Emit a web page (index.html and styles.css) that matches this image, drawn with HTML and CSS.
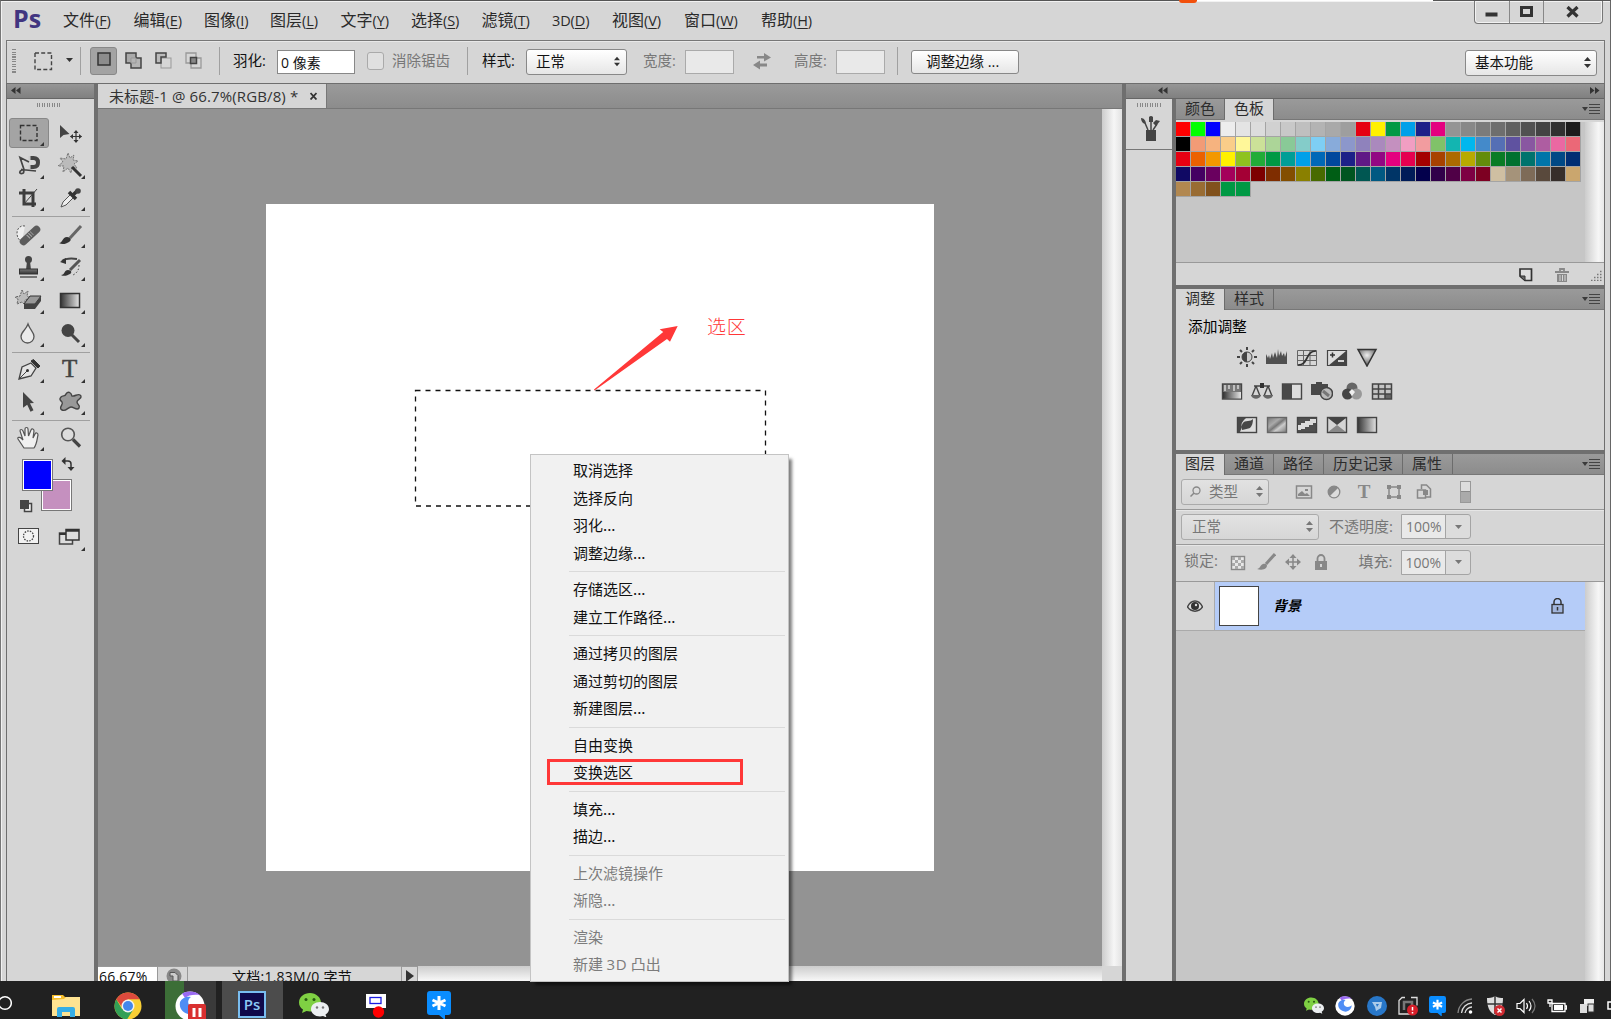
FILE: index.html
```html
<!DOCTYPE html>
<html lang="zh-CN">
<head>
<meta charset="utf-8">
<title>Photoshop</title>
<link rel="stylesheet" href="styles.css">
</head>
<body>
<svg width="0" height="0" class="defs">
  <defs>
    <linearGradient id="gDark" x1="0" y1="0" x2="0" y2="1"><stop offset="0" stop-color="#777"/><stop offset="1" stop-color="#333"/></linearGradient>
    <linearGradient id="gH" x1="0" y1="0" x2="1" y2="0"><stop offset="0" stop-color="#333"/><stop offset="1" stop-color="#e4e4e4"/></linearGradient>
    <linearGradient id="gDiag" x1="0" y1="0" x2="1" y2="1"><stop offset="0" stop-color="#777"/><stop offset=".35" stop-color="#aaa"/><stop offset=".5" stop-color="#777"/><stop offset=".65" stop-color="#ccc"/><stop offset="1" stop-color="#777"/></linearGradient>
    <radialGradient id="gTri" cx=".5" cy=".35" r=".5"><stop offset="0" stop-color="#eee"/><stop offset="1" stop-color="#777"/></radialGradient>
    <symbol id="corner" viewBox="0 0 4 4"><path d="M4 0V4H0Z" fill="#333"/></symbol>
    <symbol id="updown" viewBox="0 0 7 11"><path d="M3.500 0L7 4H0ZM3.500 11L0 7H7Z" fill="currentColor"/></symbol>
    <symbol id="flyout" viewBox="0 0 18 10"><path d="M0 3h6l-3 4z" fill="#3a3a3a"/><path d="M7 .5h11M7 3.500h11M7 6.500h11M7 9.500h11" stroke="#444"/></symbol>
    <symbol id="wechat" viewBox="0 0 30 24"><path d="M11 0C5 0 0 4 0 9.500c0 3 1.500 5.500 4 7L3 20l4.500-2c1 .3 2.500.5 3.500.5 6 0 11-4 11-9S17 0 11 0Z" fill="#7fd043"/><circle cx="7" cy="6.500" r="1.500" fill="#275a12"/><circle cx="15" cy="6.500" r="1.500" fill="#275a12"/><path d="M21 9c-5 0-9 3-9 7.200 0 4 4 7.200 9 7.200 1 0 2-.2 3-.5l3.500 1.600-1-3c2-1.300 3.500-3 3.500-5.300C30 12 26 9 21 9Z" fill="#eceff1"/><circle cx="18" cy="14.500" r="1.200" fill="#777"/><circle cx="24" cy="14.500" r="1.200" fill="#777"/></symbol>
    <symbol id="bird" viewBox="0 0 30 30"><circle cx="15" cy="15" r="14.500" fill="#fff"/><path d="M7 2.500C12-.5 20-.5 25 4 19 3 13 4 10 7Z" fill="#9a6af2"/><path d="M5 11c2-4 6-6 11-5-3 2-4 6-1 9 3 2.500 7 2 10-1 0 6-6 11-12 9C7 21 4 17 5 11Z" fill="#4f8df5"/></symbol>
    <symbol id="star" viewBox="0 0 24 28"><path d="M3 0h18q3 0 3 3v18q0 3-3 3h-3v5l-6-5H3q-3 0-3-3V3q0-3 3-3Z" fill="#0a8dff"/><path d="M12 5v14M5.500 9l13 6M18.500 9l-13 6" stroke="#fff" stroke-width="3"/></symbol>
  </defs>
</svg>

<div class="app">
  <div class="strip"><span class="strip-dot"></span><span class="strip-line"></span></div>
  <header class="menubar">
    <span class="logo">Ps</span>
    <nav class="menus">
      <span class="m m1">文件<i>(<u>F</u>)</i></span><span class="m m2">编辑<i>(<u>E</u>)</i></span><span class="m m0">图像<i>(<u>I</u>)</i></span><span class="m m2">图层<i>(<u>L</u>)</i></span><span class="m m3">文字<i>(<u>Y</u>)</i></span><span class="m m3">选择<i>(<u>S</u>)</i></span><span class="m m3">滤镜<i>(<u>T</u>)</i></span><span class="m m4"><i>3D(<u>D</u>)</i></span><span class="m m5">视图<i>(<u>V</u>)</i></span><span class="m m6">窗口<i>(<u>W</u>)</i></span><span class="m m6">帮助<i>(<u>H</u>)</i></span>
    </nav>
    <div class="winbtns">
      <span class="wb wb-min"><svg width="14" height="12"><rect x=".5" y="6.500" width="12" height="4" fill="#333"/></svg></span>
      <span class="wb wb-max"><svg width="14" height="12"><rect x="1.500" y="1.500" width="10" height="8" fill="none" stroke="#333" stroke-width="3"/></svg></span>
      <span class="wb wb-close"><svg width="14" height="12"><path d="M1.500 1l10 9.500M11.500 1l-10 9.500" stroke="#333" stroke-width="3.200"/></svg></span>
    </div>
  </header>

  <section class="options">
    <span class="grip-v"></span>
    <svg class="o-marq" width="19" height="19"><rect x="1" y="1" width="16.500" height="16.500" fill="none" stroke="#444" stroke-width="1.400" stroke-dasharray="4 2.200"/></svg>
    <svg class="o-caret" width="7" height="4"><path d="M0 0h7L3.500 4z" fill="#333"/></svg>
    <span class="vsep s1"></span>
    <span class="o-mode"><svg width="14" height="14"><rect x="1" y="1" width="12" height="12" fill="#8c8c8c" stroke="#333" stroke-width="1.500"/></svg></span>
    <svg class="o-i1" width="17" height="17"><rect x="1" y="1" width="10" height="10" fill="#aaa" stroke="#444" stroke-width="1.500"/><path d="M6 6h10v10H6z" fill="#b4b4b4"/><path d="M11 6h5v10H6v-5" fill="none" stroke="#444" stroke-width="1.500"/><path d="M6 11V6h5v5z" fill="none" stroke="#999"/></svg>
    <svg class="o-i2" width="17" height="17"><rect x="6" y="6" width="10" height="10" fill="none" stroke="#999"/><path d="M6 11H1V1h10v4H6z" fill="#bbb" stroke="#444" stroke-width="1.500"/></svg>
    <svg class="o-i3" width="17" height="17"><path d="M1 1h10v10H1zM6 6h10v10H6z" fill="none" stroke="#999" stroke-width="1.300"/><rect x="5.500" y="5.500" width="6" height="6" fill="#888" stroke="#444" stroke-width="1.500"/></svg>
    <span class="vsep s2"></span>
    <label class="lbl l1">羽化:</label>
    <span class="inp inp-f">0 像素</span>
    <span class="chk"></span>
    <label class="lbl dim l2">消除锯齿</label>
    <span class="vsep s3"></span>
    <label class="lbl l3">样式:</label>
    <span class="sel sel-s">正常<svg width="6" height="11"><use href="#updown"/></svg></span>
    <label class="lbl dim l4">宽度:</label>
    <span class="inp inp-d"></span>
    <svg class="o-swap" width="18" height="18" fill="#888"><path d="M4 4h7V1l7 4.500-7 4V6.500H4zM14 11.500H7V8.500L0 13l7 4.500V14.500h7z"/></svg>
    <label class="lbl dim l5">高度:</label>
    <span class="inp inp-d"></span>
    <span class="vsep s4"></span>
    <span class="btn">调整边缘 ...</span>
    <span class="sel sel-w">基本功能<svg width="7" height="11"><use href="#updown"/></svg></span>
  </section>

  <main class="work">
    <aside class="tools">
      <div class="dockhead"><svg width="10" height="7" fill="#333"><path d="M4.500 0v7L0 3.500zM9.500 0v7L5 3.500z"/></svg></div>
      <span class="grip-h"></span>
      <div class="tgrid">
        <span class="tool on"><svg viewBox="0 0 41 32"><rect x="11.500" y="8.500" width="16.500" height="15" fill="none" stroke="#333" stroke-width="1.400" stroke-dasharray="4 2"/></svg></span>
        <span class="tool nc"><svg viewBox="0 0 41 32"><path d="M10 8v13l3.500-3 6-1z" fill="#444"/><path d="M26 14v11M20.500 19.500h11" stroke="#333" stroke-width="1.200"/><path d="M26 13l2.500 3h-5zM26 26l2.500-3h-5zM20 19.500l3-2.500v5zM32 19.500l-3-2.500v5z" fill="#333"/></svg></span>
        <span class="tool"><svg viewBox="0 0 41 32"><path d="M20 12L11 7.500l4 12M13 20c-3 1-3 4 0 3.500s2-4-1-4l15 1.500" fill="none" stroke="#444" stroke-width="1.700"/><path d="M20 8h4.500q4.500 0 4.500 4.500T24.500 17H20" fill="none" stroke="#444" stroke-width="4"/><path d="M19.500 6h2v4h-2zM19.500 15h2v4h-2z" fill="#ccc"/></svg></span>
        <span class="tool"><svg viewBox="0 0 41 32"><path d="M18 3l2 5 4-3-1 5 5 1-4 3 3 4-5-1-1 6-3-5-5 4 1-6-6 0 5-4-3-4 6 1z" fill="#bbb" stroke="#777" stroke-dasharray="2 1"/><path d="M22 17l9 9" stroke="#333" stroke-width="3"/></svg></span>
        <span class="tool"><svg viewBox="0 0 41 32"><path d="M15 7v15h12M10 11h14v14" fill="none" stroke="#3c3c3c" stroke-width="3"/><path d="M15 22L28 7" stroke="#444"/></svg></span>
        <span class="tool"><svg viewBox="0 0 41 32"><path d="M11 25l2-5 8-8 3 3-8 8z" fill="#eee" stroke="#555"/><path d="M19 10l7 7M22 14l6-6" stroke="#333" stroke-width="3.500"/><circle cx="28" cy="9" r="2.800" fill="#444"/></svg></span>
      </div>
      <div class="tgrid sep g2">
        <span class="tool"><svg viewBox="0 0 41 32"><path d="M16 7c-5-1-8 3-8 7s2 8 5 8" fill="#eee" stroke="#555" stroke-dasharray="2 1.500"/><path d="M14.500 22.500L27.500 10.500" stroke="#5c5c5c" stroke-width="7.500" stroke-linecap="round"/><path d="M19 18l4-4" stroke="#aaa" stroke-width="5" stroke-dasharray="1 1.500"/></svg></span>
        <span class="tool"><svg viewBox="0 0 41 32"><path d="M31 7L20 19" stroke="#666" stroke-width="3"/><path d="M9 24c4 0 3-6 8-6 4 0 5 3 2 5s-7 3-10 1z" fill="#333"/></svg></span>
        <span class="tool"><svg viewBox="0 0 41 32"><circle cx="19.500" cy="7.500" r="3.500" fill="#444"/><path d="M18 9h3l1 9h-5z" fill="#444"/><rect x="10.500" y="17" width="18" height="5" fill="url(#gDark)" stroke="#333"/><path d="M11 25h17" stroke="#555" stroke-width="1.500"/></svg></span>
        <span class="tool"><svg viewBox="0 0 41 32"><path d="M12 9c4-3 8-3 15-2" fill="none" stroke="#444" stroke-width="2"/><path d="M10 10l6-4v6z" fill="#333"/><path d="M30 8L20 18" stroke="#555" stroke-width="3"/><path d="M11 23c4 0 3-5 7-5 4 0 4 3 2 4s-6 3-9 1z" fill="#333"/><path d="M29 13c0 5-2 8-6 10" fill="none" stroke="#444" stroke-dasharray="1.500 2"/></svg></span>
        <span class="tool"><svg viewBox="0 0 41 32"><path d="M13 5l2 4 4-3-1 5 3 2-5 2 0 5-3-3-5 2 1-5-3-2 5-1z" fill="#bbb" stroke="#666" stroke-dasharray="2 1"/><path d="M21 11h11l-6 8H15z" fill="#999" stroke="#333"/><path d="M15 19h11v5H15zM26 19l6-8v5l-6 8z" fill="#444"/></svg></span>
        <span class="tool"><svg viewBox="0 0 41 32"><rect x="10.500" y="8.500" width="19" height="14" fill="url(#gH)" stroke="#333" stroke-width="1.500"/></svg></span>
        <span class="tool"><svg viewBox="0 0 41 32"><path d="M19 6c2 6 6 8 6 12.500a6.500 6.500 0 0 1-13 0C12 14 17 12 19 6z" fill="#eaeaea" stroke="#555" stroke-width="1.300"/></svg></span>
        <span class="tool"><svg viewBox="0 0 41 32"><circle cx="18" cy="12.500" r="6.500" fill="#444"/><path d="M21 16l8 8" stroke="#444" stroke-width="3"/></svg></span>
      </div>
      <div class="tgrid sep">
        <span class="tool"><svg viewBox="0 0 41 32"><path d="M10 25l3-12 9-4 5 5-5 8z" fill="#e4e4e4" stroke="#444" stroke-width="1.300"/><path d="M10 25l8-8" stroke="#444"/><circle cx="18.500" cy="16.500" r="1.500" fill="#333"/><path d="M22 7l7 7 2-2-6.500-6.500z" fill="#333" stroke="#333"/></svg></span>
        <span class="tool"><b>T</b></span>
        <span class="tool"><svg viewBox="0 0 41 32"><path d="M14 6l11 11-4 .3 3.500 7-3 1.500-3.300-7-4.200 3z" fill="#444"/></svg></span>
        <span class="tool"><svg viewBox="0 0 41 32"><path d="M16 8c2-3 5-2 6 2 3 1 7-4 9 0 1 3-4 3-4 6s4 3 2 6-5-1-8-1-5 5-9 3 2-6 0-8-3-3-1-5 4 0 5-3z" fill="#999" stroke="#444" stroke-width="1.400"/></svg></span>
      </div>
      <div class="tgrid sep">
        <span class="tool"><svg viewBox="0 0 41 32"><path d="M15 26c-2-3-4-6-6-9-1-2 2-2 3-1l2 2-3-9c0-2 2-2 3 0l2 5V7c0-2 3-2 3 0l.5 7L22 8c1-2 3-1 3 1l-1 7 2-4c1-2 3-1 3 1-1 4-1 9-4 13z" fill="#f0f0f0" stroke="#555" stroke-width="1.200"/></svg></span>
        <span class="tool nc"><svg viewBox="0 0 41 32"><circle cx="18" cy="12.500" r="6.300" fill="#ddd" stroke="#555" stroke-width="1.600"/><path d="M23 17.500l7 7" stroke="#444" stroke-width="3.200"/></svg></span>
      </div>
      <svg class="colors" width="87" height="94" viewBox="0 0 87 94">
        <rect x="34.500" y="25.500" width="30" height="31" fill="#fff" stroke="#777"/><rect x="36" y="27" width="27" height="28" fill="#c590bf"/>
        <rect x="15.500" y="5.500" width="30" height="31" fill="#fff" stroke="#777"/><rect x="17" y="7" width="27" height="28" fill="#00f"/>
        <path d="M56 7h5q3 0 3 3v5" fill="none" stroke="#333" stroke-width="1.500"/><path d="M54.500 7l4-4v8zM64 17l-3.500-4h7z" fill="#333"/>
        <rect x="17.500" y="49.500" width="7" height="8" fill="#eee" stroke="#444" stroke-width="1.500"/><rect x="13" y="46" width="9" height="9" fill="#444"/>
        <rect x="11.500" y="74.500" width="20" height="15" fill="#f2f2f2" stroke="#444"/><circle cx="21.500" cy="82" r="5" fill="none" stroke="#444" stroke-width="1.300" stroke-dasharray="1.500 1.200"/>
        <rect x="52.500" y="79" width="13" height="11" fill="#ddd" stroke="#444" stroke-width="1.500"/><path d="M52 80h13" stroke="#333" stroke-width="2"/><rect x="59" y="75.500" width="13" height="10.500" fill="#ddd" stroke="#333" stroke-width="1.500"/><path d="M59 76.500h13" stroke="#333" stroke-width="2.500"/>
      </svg>
      <svg class="lastcorner" width="4" height="4"><use href="#corner"/></svg>
    </aside>

    <section class="doc">
      <div class="doctabs"><span class="doctab">未标题-1 @ 66.7%(RGB/8) *<svg width="7" height="8"><path d="M.5 1l6 6.500M6.500 1l-6 6.500" stroke="#333" stroke-width="1.800"/></svg></span></div>
      <div class="docbody">
        <div class="pasteboard">
          <div class="canvas">
            <svg class="marks" width="667" height="667">
              <rect x="149.500" y="186.500" width="350" height="115.500" fill="none" stroke="#111" stroke-width="1.300" stroke-dasharray="5 5"/>
              <path d="M411.700 122l-18 3.300 3.500 2.600L328 185.500l.5 1L401 135l3 2.700z" fill="#ff3838"/>
            </svg>
            <span class="note">选区</span>
          </div>
        </div>
        <div class="vscroll"></div>
      </div>
      <div class="status">
        <span class="zoom">66.67%</span>
        <span class="st-ic"><svg width="16" height="16"><circle cx="8" cy="8" r="7.500" fill="#888"/><path d="M4 4.500h5l3 3V13H7V8H4z" fill="#ccc" stroke="#555"/></svg></span>
        <span class="st-txt">文档:1.83M/0 字节</span>
        <span class="st-arr"><svg width="8" height="12"><path d="M0 0l8 6-8 6z" fill="#333"/></svg></span>
        <span class="hscroll"></span><span class="scorner"></span>
      </div>
    </section>

    <section class="right">
      <div class="dockhead dh-r"><svg width="10" height="7" fill="#333"><path d="M4.500 0v7L0 3.500zM9.500 0v7L5 3.500z"/></svg><svg width="10" height="7" fill="#333"><path d="M0 0v7l4.500-3.500zM5 0v7l4.500-3.500z"/></svg></div>
      <div class="rcols">
        <div class="icondock">
          <div class="idtop"><span class="grip-h"></span><svg width="22" height="26" fill="#444"><path d="M6 14h10v11H6z"/><path d="M8 14L5 7M11 14V6M13 14l4-6" stroke="#444" stroke-width="1.500"/><path d="M1 2c3 0 5 3 5 6-3 0-5-3-5-6zM9 1q2-2 4 0v5H9zM13 7l3-3 4 1-4 5z"/></svg></div>
        </div>
        <div class="panels">
          <div class="panel">
            <div class="tabs"><span class="tab">颜色</span><span class="tab act">色板</span><svg class="fly" width="18" height="10"><use href="#flyout"/></svg></div>
            <div class="swbody"><div class="swatches" id="swatches"></div><div class="pscroll"></div></div>
            <div class="swfoot">
              <svg width="14" height="14"><path d="M1 1h11.500v11.500H6L1 8z" fill="#ddd" stroke="#333" stroke-width="1.700"/><path d="M1 8h5v5z" fill="#666" stroke="#333"/></svg>
              <svg width="14" height="15"><path d="M0 4h14M5 3V1h4v2" fill="none" stroke="#888" stroke-width="1.800"/><path d="M2 6h10v8H2z" fill="#888"/><path d="M5 7v6M7.500 7v6M10 7v6" stroke="#d6d6d6"/></svg>
              <svg width="12" height="12"><path d="M0 11.500h12M3 8.500h9M6 5.500h6M9 2.500h3" stroke="#777" stroke-width="1.300" stroke-dasharray="1.500 1.500"/></svg>
            </div>
          </div>
          <div class="panel">
            <div class="tabs"><span class="tab act">调整</span><span class="tab">样式</span><svg class="fly" width="18" height="10"><use href="#flyout"/></svg></div>
            <div class="adj">
              <div class="adj-t">添加调整</div>
              <div class="adjrow r1">
                <svg viewBox="0 0 22 20"><circle cx="11" cy="10" r="5" fill="#ccc" stroke="#444"/><path d="M11 5a5 5 0 0 0 0 10z" fill="#444"/><path d="M11 0v3M11 17v3M1 10h3M18 10h3M4 3l2 2M16 15l2 2M18 3l-2 2M6 15l-2 2" stroke="#444" stroke-width="2"/></svg>
                <svg viewBox="0 0 22 20"><path d="M0 17V7l2 4 1-3 1 4 2-6 1 5 2-6 2 6 1-9 1 7 2-5 1 5 2-3 1 4 2-6v13z" fill="#505050"/></svg>
                <svg viewBox="0 0 22 20"><path d="M1.500 3.500h19v15h-19zM1.500 8.500h19M1.500 13.500h19M7.500 3.500v15M14 3.500v15" fill="none" stroke="#666"/><path d="M2 18C13 18 9 4 20 4" fill="none" stroke="#333" stroke-width="1.700"/></svg>
                <svg viewBox="0 0 22 20"><path d="M1.500 3.500h19v15h-19z" fill="#ddd" stroke="#444" stroke-width="1.200"/><path d="M20 4v15H2z" fill="#444"/><path d="M4 8h5M6.500 5.500v5" stroke="#333" stroke-width="1.500"/><path d="M12 14h6" stroke="#eee" stroke-width="1.700"/></svg>
                <svg viewBox="0 0 22 20"><path d="M2 2.500h18L11 19z" fill="url(#gTri)" stroke="#333" stroke-width="1.500"/></svg>
              </div>
              <div class="adjrow r2">
                <svg viewBox="0 0 22 20"><rect x="1.500" y="3" width="19" height="15" fill="#777" stroke="#444" stroke-width="1.400"/><path d="M4 4v6M8 4v4M13 4v6M17 4v4" stroke="#ccc" stroke-width="1.700"/><rect x="2" y="11" width="18" height="6.500" fill="url(#gH)"/></svg>
                <svg viewBox="0 0 22 20"><path d="M3 5h16M11 2v5M5 5L1 15M5 5l4 10M17 5l-4 10M17 5l4 10" fill="none" stroke="#444" stroke-width="1.400"/><path d="M0 14h10c-1 5-9 5-10 0zM12 14h10c-1 5-9 5-10 0z" fill="#666"/><rect x="9" y="2" width="4" height="5" fill="#333"/></svg>
                <svg viewBox="0 0 22 20"><rect x="1.500" y="3" width="19" height="15" fill="#ddd" stroke="#444" stroke-width="1.400"/><path d="M2 3h9v15H2z" fill="#484848"/></svg>
                <svg viewBox="0 0 22 20"><path d="M0 3h5V1h6v2h6v11H0z" fill="#484848"/><circle cx="15.500" cy="12.500" r="6" fill="#bbb" stroke="#444" stroke-width="1.500"/><path d="M12 10l6 5" stroke="#777" stroke-width="3"/></svg>
                <svg viewBox="0 0 22 20"><circle cx="11" cy="7" r="5.500" fill="#666"/><circle cx="6.500" cy="13" r="5.500" fill="#444"/><circle cx="15.500" cy="13" r="5.500" fill="#999"/><path d="M11 8l3 3-3 4-3-4z" fill="#eee"/></svg>
                <svg viewBox="0 0 22 20"><path d="M1.500 3h19v15h-19z" fill="#c4c4c4"/><path d="M14 13h6v5h-6z" fill="#666"/><path d="M1.500 3h19v15h-19zM1.500 8h19M1.500 13h19M7.500 3v15M14 3v15" fill="none" stroke="#444" stroke-width="1.500"/></svg>
              </div>
              <div class="adjrow r3">
                <svg viewBox="0 0 22 20"><rect x="1.500" y="2.500" width="19" height="15" fill="#ddd" stroke="#444" stroke-width="1.400"/><path d="M2 3h8Q4 8 6 12l-2 5H2z" fill="#484848"/><path d="M6 15c-1-6 1-9 6-9 2 0 4-1 5-2 0 4-1 7-3 9-2 1-5 1-8 2z" fill="#484848"/></svg>
                <svg viewBox="0 0 22 20"><rect x="1.500" y="2.500" width="19" height="15" fill="url(#gDiag)" stroke="#666" stroke-width="1.400"/></svg>
                <svg viewBox="0 0 22 20"><rect x="1.500" y="2.500" width="19" height="15" fill="#505050" stroke="#444" stroke-width="1.400"/><path d="M2 10h3V8h4V6h5V4h6v4h-3v2h-4v2H9v2H5v1H2z" fill="#ddd"/></svg>
                <svg viewBox="0 0 22 20"><rect x="1.500" y="2.500" width="19" height="15" fill="#d4d4d4" stroke="#444" stroke-width="1.400"/><path d="M2 3h18l-9 7z" fill="#444"/><path d="M2 17h18l-9-7z" fill="#888"/></svg>
                <svg viewBox="0 0 22 20"><rect x="1.500" y="2.500" width="19" height="15" fill="url(#gH)" stroke="#444" stroke-width="1.400"/></svg>
              </div>
            </div>
          </div>
          <div class="panel layers">
            <div class="tabs"><span class="tab act">图层</span><span class="tab">通道</span><span class="tab t3">路径</span><span class="tab t4">历史记录</span><span class="tab t3">属性</span><svg class="fly" width="18" height="10"><use href="#flyout"/></svg></div>
            <div class="lrow lr1">
              <span class="psel ps1"><svg class="mag" width="11" height="11"><circle cx="6.500" cy="4.500" r="3.500" fill="none" stroke="#888" stroke-width="1.300"/><path d="M4 7l-3.500 3.500" stroke="#888" stroke-width="1.500"/></svg>类型<svg class="ud" width="7" height="11"><use href="#updown"/></svg></span>
              <span class="ficons">
                <svg viewBox="0 0 20 16"><rect x="2.500" y="2" width="15" height="12" fill="none" stroke="#888" stroke-width="1.500"/><path d="M4 12v-2l4-3 3 3 2-1 3 3zM11 5h3v2h-3z" fill="#888"/></svg>
                <svg viewBox="0 0 20 16"><circle cx="10" cy="8" r="5.800" fill="#dcdcdc" stroke="#888" stroke-width="1.300"/><path d="M14.300 3.700A6.100 6.100 0 0 0 5.700 12.300z" fill="#888"/></svg>
                <b>T</b>
                <svg viewBox="0 0 20 16"><rect x="5" y="3" width="10" height="10" fill="none" stroke="#888" stroke-width="1.500"/><path d="M3 1h4v4H3zM13 1h4v4h-4zM3 11h4v4H3zM13 11h4v4h-4z" fill="#888"/></svg>
                <svg viewBox="0 0 20 16"><path d="M7.500 5V1h5l4 4v8H12" fill="none" stroke="#888" stroke-width="1.500"/><rect x="3.500" y="6" width="8" height="8" fill="none" stroke="#888" stroke-width="1.500"/><path d="M9 6h5v5H9z" fill="#888"/></svg>
              </span>
              <span class="toggle"></span>
            </div>
            <div class="lrow lr2">
              <span class="psel ps2">正常<svg class="ud" width="7" height="11"><use href="#updown"/></svg></span>
              <label class="plb pl1">不透明度:</label>
              <span class="pct"><em>100%</em><svg width="7" height="4"><path d="M0 0h7L3.500 4z" fill="#777"/></svg></span>
            </div>
            <div class="lrow lr3">
              <label class="plb pl2">锁定:</label>
              <span class="licons">
                <svg viewBox="0 0 20 18"><rect x="3.500" y="3.500" width="13" height="13" fill="#e8e8e8" stroke="#888" stroke-width="1.400"/><path d="M4 4h3v3H4zM10 4h3v3h-3zM7 7h3v3H7zM13 7h3v3h-3zM4 10h3v3H4zM10 10h3v3h-3zM7 13h3v3H7zM13 13h3v3h-3z" fill="#aaa"/></svg>
                <svg viewBox="0 0 20 18"><path d="M19 1l-9 10" stroke="#888" stroke-width="3"/><path d="M1 16c3 0 3-4 6-5 4-1 5 2 3 4s-6 2-9 1z" fill="#888"/></svg>
                <svg viewBox="0 0 20 18"><path d="M10 2v14M3 9h14" stroke="#888" stroke-width="1.500"/><path d="M10 1l3.500 4h-7zM10 17l3.500-4h-7zM2 9l4-3.500v7zM18 9l-4-3.500v7z" fill="#888"/></svg>
                <svg viewBox="0 0 20 18"><rect x="4" y="8" width="12" height="9" fill="#888"/><path d="M6.500 8V5.500a3.500 3.500 0 0 1 7 0V8" fill="none" stroke="#888" stroke-width="1.800"/><path d="M10 11v3" stroke="#ddd" stroke-width="1.800"/></svg>
              </span>
              <label class="plb pl3">填充:</label>
              <span class="pct"><em>100%</em><svg width="7" height="4"><path d="M0 0h7L3.500 4z" fill="#777"/></svg></span>
            </div>
            <div class="llist">
              <div class="lmain">
                <div class="layer">
                  <span class="eye"><svg width="16" height="12"><path d="M.5 7C4-1 12-1 15.500 7 12 12.500 4 12.500.5 7z" fill="#ddd" stroke="#444" stroke-width="1.500"/><circle cx="8" cy="6" r="4" fill="#333"/><circle cx="9" cy="5" r="1.200" fill="#ddd"/></svg></span>
                  <span class="thumb"></span><span class="lname">背景</span>
                  <svg class="lk" width="13" height="16"><rect x="1" y="6.500" width="11" height="8.500" fill="#a2b5dc" stroke="#333" stroke-width="1.300"/><path d="M3 6V4a3.500 3.500 0 0 1 7 0v2" fill="none" stroke="#333" stroke-width="1.500"/><path d="M6.500 9v3.500" stroke="#333" stroke-width="1.500"/></svg>
                </div>
              </div>
              <div class="pscroll"></div>
            </div>
          </div>
        </div>
      </div>
    </section>
  </main>
</div>

<div class="ctx">
  <div>取消选择</div><div>选择反向</div><div>羽化...</div><div>调整边缘...</div><hr>
  <div>存储选区...</div><div>建立工作路径...</div><hr>
  <div>通过拷贝的图层</div><div>通过剪切的图层</div><div>新建图层...</div><hr>
  <div>自由变换</div><div class="boxed">变换选区</div><hr>
  <div>填充...</div><div>描边...</div><hr>
  <div class="off">上次滤镜操作</div><div class="off">渐隐...</div><hr>
  <div class="off">渲染</div><div class="off">新建 <i>3D</i> 凸出</div>
</div>

<footer class="taskbar">
  <span class="tb c0"><svg width="12" height="16"><circle cx="5" cy="8" r="6.300" fill="none" stroke="#fff" stroke-width="1.500"/></svg></span>
  <span class="tb c1"><svg width="28" height="24"><path d="M0 1h11l2 2h13v4H0z" fill="#f5bd2b"/><path d="M2 2h7v2H2z" fill="#fff"/><path d="M0 6l12-1 2-2h14v19H0z" fill="#ffe391"/><path d="M5 23V15q0-2 2-2h14q2 0 2 2v8h-5v-5h-8v5z" fill="#37aee6"/></svg></span>
  <span class="tb c2"><svg width="28" height="28"><circle cx="14" cy="14" r="13.500" fill="#f9cf35"/><path d="M2.300 7.250A13.500 13.500 0 0 0 13 27.500l6-9.500L8 17z" fill="#33a057"/><path d="M2.300 7.250A13.500 13.500 0 0 1 25.700 7.250H14L8 15z" fill="#dc4a3d"/><circle cx="14" cy="14" r="6.500" fill="#f3f3f3"/><circle cx="14" cy="14" r="5" fill="#4387ec"/></svg></span>
  <span class="tb c3"><svg width="32" height="30"><use href="#bird" x="0" y="0" width="30" height="30"/><rect x="13" y="13" width="18" height="18" rx="2" fill="#d93030"/><path d="M19 17v9M25 17v9" stroke="#fff" stroke-width="3"/></svg></span>
  <span class="tb c4"><span class="pstile">Ps</span></span>
  <span class="tb c5"><svg width="30" height="24"><use href="#wechat"/></svg></span>
  <span class="tb c6"><svg width="20" height="26"><rect x="0" y="1" width="20" height="14" fill="#fff"/><rect x="4" y="4.500" width="11" height="6" fill="#fff" stroke="#1b1be0" stroke-width="1.300"/><circle cx="12.500" cy="19" r="5.700" fill="#f00"/></svg></span>
  <span class="tb c7"><svg width="24" height="28"><use href="#star"/></svg></span>
  <span class="tray">
    <svg width="20" height="17"><use href="#wechat"/></svg>
    <svg width="20" height="20"><use href="#bird"/></svg>
    <svg width="20" height="20"><circle cx="10" cy="10" r="10" fill="#2877c8"/><path d="M5 6l10 0-1 6-5 3-1-4z" fill="#a9cbea"/><path d="M9 8h3l-2 3z" fill="#2877c8"/></svg>
    <svg width="20" height="20"><path d="M13 1.500h6v8M14 18H1V4.500l3-3h3" fill="none" stroke="#ddd" stroke-width="1.300"/><path d="M6 14V6h8v5" fill="none" stroke="#777" stroke-width="2.500"/><circle cx="14.500" cy="14" r="5.500" fill="#d81f2a"/><path d="M14.500 11v3.500M14.500 16v1.500" stroke="#fff" stroke-width="1.500"/></svg>
    <svg width="17" height="20"><use href="#star"/></svg>
    <svg width="16" height="17"><path d="M1 16A15 15 0 0 1 15 2" fill="none" stroke="#888" stroke-width="1.300"/><path d="M4.500 16A11 11 0 0 1 15 6M8 16a7 7 0 0 1 7-6" fill="none" stroke="#ddd" stroke-width="1.300"/><circle cx="13.500" cy="15" r="1.800" fill="#fff"/></svg>
    <svg width="20" height="20"><path d="M10 0c3 2 6 2 8 2 0 8-2 14-8 17C4 16 2 10 2 2c2 0 5 0 8-2z" fill="#ddd"/><path d="M10 0v18M2 8h16" stroke="#333" stroke-width="1.500"/><circle cx="14.500" cy="14.500" r="5.500" fill="#cf2b32"/><path d="M12.500 12.500l4 4M16.500 12.500l-4 4" stroke="#fff" stroke-width="1.500"/></svg>
    <svg width="20" height="16"><path d="M1 5.500h3l4-4v13l-4-4H1z" fill="none" stroke="#fff" stroke-width="1.200"/><path d="M10.500 5q2 3 0 6M13 3q4 5 0 10" fill="none" stroke="#fff" stroke-width="1.200"/><path d="M16 1q6 7 0 14" fill="none" stroke="#777" stroke-width="1.200"/></svg>
    <svg width="20" height="16"><path d="M5 5.500h13v8H5zM18 8h1.500v3H18M1 2h4v3H1zM3 5v4" fill="none" stroke="#fff" stroke-width="1.300"/><path d="M7 7h9v5H7z" fill="#fff"/></svg>
    <svg width="17" height="16"><rect x="5" y="1" width="10" height="7" fill="#eee"/><rect x="1" y="6" width="7" height="9" fill="#ddd"/><rect x="9" y="6" width="6" height="8" fill="#ddd" stroke="#333"/></svg>
    <svg class="last" width="4" height="10"><path d="M4 1H1v7h3" fill="none" stroke="#fff" stroke-width="1.500"/></svg>
  </span>
</footer>
<script src="swatches.js"></script>
</body>
</html>
```

FILE: swatches.js
```js
const rows = [
  "f00 0f0 00f ededed e4e4e4 dcdcdc d1d1d1 c8c8c8 bfbfbf b3b3b3 a9a9a9 9e9e9e e60012 fff100 009944 00a0e9 1d2088 e4007f 949494 888 7b7b7b 6e6e6e 606060 515151 434343 303030 1b1b1b",
  "000 f29b76 f6b37f facd89 fff799 cce198 acd598 89c997 84ccc9 7ecef4 88abda 8c97cb 8f82bc aa89bd c490bf f19ec2 f29c9f 80c269 13b5b1 00b7ee 448aca 556fb5 5f52a0 8957a1 ae5da1 ea68a2 eb6877",
  "e60012 eb6100 f39800 fff100 8fc31f 22ac38 009944 009e96 00a0e9 0068b7 00479d 1d2088 601986 920783 e4007f e5004f a40000 a84200 ac6a00 b7aa00 638c0b 097c25 007130 00736d 0075a9 004986 002e73",
  "100964 440062 6a005f a4005b a40035 7d0000 7f2d00 834e00 8a8000 486a00 005e15 005520 005752 005982 003567 001c58 03004c 31004a 500047 7e0043 7d0022 cfbfa2 a5937a 7e6b58 59493c 362e2b caa66e",
  "b28850 996c33 81511c 009944 009944"
];
const box = document.getElementById("swatches");
rows.join(" ").split(" ").forEach(c => {
  const s = document.createElement("span");
  s.style.background = "#" + c;
  box.appendChild(s);
});
```

FILE: styles.css
```css
*, ::before, ::after { box-sizing: border-box; }
body { margin: 0; width: 1611px; height: 1019px; overflow: hidden; position: relative; background: #202020;
  font-family: "Open Sans", "Noto Sans CJK SC", sans-serif; font-size: 15px; color: #111; }
i, em { font-style: normal; }
svg { flex: none; display: block; }
.defs { position: absolute; }

.app { height: 981px; background: #d6d6d6; border-left: 1px solid #777; border-right: 1px solid #666; border-top: 1px solid #555;
  box-shadow: inset 1px 1px 0 #f2f2f2; padding: 0 5px 0 5px; display: flex; flex-direction: column; position: relative; }
.strip { position: absolute; top: -1px; left: 1178px; display: flex; height: 2px; }
.strip-dot { width: 18px; height: 3px; background: #f2500c; border-radius: 0 0 6px 6px; }
.strip-line { width: 236px; height: 1px; background: #fff; }

.menubar { height: 39px; display: flex; flex: none; }
.logo { font: bold 25px/34px "Open Sans", sans-serif; color: #413580; width: 57px; padding-left: 7px; }
.menus { display: flex; height: 38px; align-items: center; flex: 1; }
.m { white-space: nowrap; font-size: 16px; line-height: 24px; color: #2a2a2a; font-family: "Noto Sans CJK SC", sans-serif; }
.m i { font-family: "Open Sans", sans-serif; font-size: 14.500px; letter-spacing: -.1px; }
.m u { text-underline-offset: 2px; }
.m0 { width: 66px; } .m1 { width: 70.500px; } .m2 { width: 70.500px; } .m3 { width: 70.500px; } .m4 { width: 60px; } .m5 { width: 72px; } .m6 { width: 77px; }
.winbtns { display: flex; height: 23px; border: 1px solid #777; border-top: 0; border-radius: 0 0 4px 4px; margin-right: 2px; box-shadow: inset 0 0 0 1px #f2f2f2; }
.wb { display: flex; align-items: center; justify-content: center; border-right: 1px solid #888; }
.wb-min { width: 35px; } .wb-max { width: 34px; } .wb-close { width: 58px; border: 0; }

.options { height: 43px; flex: none; border: 1px solid #777; border-width: 1px 1px 0 1px; box-shadow: inset 0 1px 0 #e8e8e8; display: flex; align-items: center; padding-bottom: 2px; }
.options > * { flex: none; }
.grip-v { width: 4px; height: 24px; margin-left: 5px; background: repeating-linear-gradient(#888 0 1px, transparent 1px 2.500px); }
.o-marq { margin-left: 18px; } .o-caret { margin-left: 13px; margin-top: -2px; }
.vsep { width: 1px; height: 28px; background: #a0a0a0; }
.s1 { margin-left: 7px; }
.o-mode { width: 27px; height: 28px; margin-left: 9px; margin-top: -1px; border: 1px solid #888; border-radius: 3px; background: #a3a3a3; display: flex; justify-content: center; padding-top: 4px; }
.o-i1 { margin-left: 8px; margin-top: -1px; } .o-i2 { margin-left: 13px; margin-top: -1px; } .o-i3 { margin-left: 13px; margin-top: -1px; }
.s2 { margin-left: 17px; }
.lbl { white-space: nowrap; font-size: 14.500px; line-height: 20px; overflow: visible; }
.dim { color: #777; }
.l1 { width: 44px; margin-left: 13px; } .l2 { width: 75px; margin-left: 8px; } .l3 { width: 44px; margin-left: 14px; }
.l4 { width: 42px; margin-left: 16px; } .l5 { width: 42px; margin-left: 23px; }
.inp { height: 24px; border: 1px solid #888; background: #fff; line-height: 23px; margin-top: 1px; }
.inp-f { width: 78px; padding-left: 3px; font-size: 14px; }
.inp-d { width: 49px; background: #e9e9e9; border-color: #aaa; }
.chk { width: 17px; height: 18px; border: 1px solid #aaa; border-radius: 3px; background: #e0e0e0; margin-left: 12px; }
.sel { display: flex; align-items: center; justify-content: space-between; height: 26px; border: 1px solid #888; border-radius: 3px; background: linear-gradient(#fff, #e6e6e6); color: #111; font-size: 14.500px; line-height: 24px; }
.sel svg { color: #333; }
.sel-s { width: 101px; padding: 0 6px 0 9px; margin-top: 1px; }
.o-swap { margin-left: 19px; }
.s4 { margin-left: 12px; }
.btn { width: 108px; height: 24px; margin-left: 13px; margin-top: 1px; border: 1px solid #888; border-radius: 3px; background: linear-gradient(#fff, #e6e6e6); padding-left: 14px; line-height: 22px; font-size: 14.500px; white-space: nowrap; }
.sel-w { width: 132px; margin-left: auto; margin-right: 7px; padding: 0 5px 0 9px; margin-top: 3px; }

.work { flex: 1; display: flex; min-height: 0; border: 1px solid #6e6e6e; border-width: 1px 1px 0; background: #6f6f6f; }
.dockhead { height: 15px; background: linear-gradient(#969696, #808080); border-bottom: 1px solid #666; display: flex; align-items: center; padding: 0 4px 1px; flex: none; }
.tools { width: 87px; background: #d6d6d6; margin-right: 4px; position: relative; flex: none; }
.grip-h { display: block; width: 25px; height: 4px; background: repeating-linear-gradient(90deg, #888 0 1px, transparent 1px 2.500px); }
.tools .grip-h { margin: 4px 0 0 30px; }
.tgrid { display: grid; grid-template-columns: 41px 41px; grid-auto-rows: 32.500px; margin-left: 2px; }
.tools .grip-h + .tgrid { margin-top: 10px; }
.tgrid.sep { padding-top: 3px; position: relative; }
.tgrid.g2 { padding-top: 4px; grid-auto-rows: 33px; }
.tgrid.sep::before { content: ""; position: absolute; left: 3px; top: 1px; width: 78px; height: 1px; background: #a0a0a0; }
.tool { position: relative; display: block; }
.tool svg { width: 41px; height: 32px; }
.tool::after { content: ""; position: absolute; left: 31px; top: 25px; border: 2px solid; border-color: transparent #333 #333 transparent; }
.tool.nc::after { display: none; }
.tool.on::before { content: ""; position: absolute; left: 0; top: 1px; width: 40px; height: 30px; background: #a4a4a4; border: 1px solid #888; border-radius: 3px; }
.tool.on svg { position: relative; }
.tool b { display: block; font: 25px/30px "Liberation Serif", serif; -webkit-text-stroke: .5px #444; color: #444; padding-left: 12px; }
.lastcorner { position: absolute; left: 74px; top: 463px; }

.doc { flex: 1; min-width: 0; display: flex; flex-direction: column; }
.doctabs { height: 25px; background: linear-gradient(#9a9a9a, #8c8c8c); border-bottom: 1px solid #777; flex: none; display: flex; }
.doctab { width: 229px; height: 24px; background: #d6d6d6; border-right: 1px solid #777; display: flex; align-items: center; justify-content: space-between; padding: 0 9px 0 11px; font-size: 15px; color: #333; white-space: nowrap; line-height: 24px; letter-spacing: .12px; }
.docbody { flex: 1; display: flex; min-height: 0; }
.pasteboard { flex: 1; background: #939393; overflow: hidden; padding: 95px 0 0 168px; }
.canvas { width: 668px; height: 667px; background: #fff; position: relative; }
.marks { position: absolute; left: 0; top: 0; }
.note { position: absolute; left: 441px; top: 108px; font: 300 19px/28px "Noto Sans CJK SC", sans-serif; letter-spacing: .8px; color: #ff3838; white-space: nowrap; }
.vscroll { width: 20px; background: linear-gradient(90deg, #ccc, #f6f6f6 60%, #e2e2e2); }
.status { height: 15px; display: flex; overflow: hidden; background: #d6d6d6; flex: none; line-height: 19px; font-size: 14px; }
.status > span { flex: none; }
.zoom { width: 59px; background: #fff; padding-left: 1px; border-top: 1px solid #999; letter-spacing: .2px; }
.st-ic { width: 31px; border: 1px solid #999; border-width: 1px 1px 0; padding: 1px 0 0 8px; }
.st-txt { width: 213px; padding-left: 44px; border-top: 1px solid #aaa; white-space: nowrap; letter-spacing: .25px; }
.st-arr { width: 17px; border: 1px solid #999; border-width: 1px 1px 0; padding: 3px 0 0 4px; }
.status .hscroll { flex: 1; background: linear-gradient(#ccc, #f8f8f8); }
.scorner { width: 20px; }

.right { width: 482px; flex: none; display: flex; flex-direction: column; padding-left: 4px; }
.dh-r { justify-content: space-between; padding: 0 4px 1px 32px; }
.rcols { flex: 1; display: flex; min-height: 0; }
.icondock { width: 46px; background: #d6d6d6; margin-right: 4px; }
.idtop { height: 51px; border-bottom: 1px solid #777; padding: 4px 0 0 11px; }
.idtop svg { margin: 9px 0 0 3px; }
.panels { flex: 1; min-width: 0; display: flex; flex-direction: column; gap: 4px; }
.panel { background: #d6d6d6; flex: none; }
.tabs { height: 21px; background: linear-gradient(#9a9a9a, #8c8c8c); border-bottom: 1px solid #777; display: flex; }
.tab { width: 49px; padding-left: 9px; border-right: 1px solid #6c6c6c; font-size: 15px; line-height: 19px; color: #2c2c2c; white-space: nowrap; }
.tab.act { background: #d6d6d6; height: 21px; }
.t4 { width: 79px; } .t3 { width: 50px; }
.fly { margin: 5px 4px 0 auto; }
.swbody { height: 143px; display: flex; background: #c6c6c6; border-top: 2px solid #d6d6d6; border-bottom: 1px solid #999; }
.swatches { display: grid; grid-template-columns: repeat(27, 15px); grid-auto-rows: 15px; width: 409px; align-content: start; }
.swatches span { border-right: 1px solid #a4a4a4; border-bottom: 1px solid #a4a4a4; }
.pscroll { width: 19px; background: linear-gradient(90deg, #ccc, #f6f6f6 70%, #e8e8e8); }
.swfoot { height: 22px; display: flex; justify-content: flex-end; align-items: center; padding: 2px 1px 0 0; }
.swfoot svg:nth-child(2) { margin: 0 22px; }
.adj { height: 140px; }
.adj-t { font-size: 14.700px; line-height: 20px; padding: 6px 0 0 12px; color: #000; }
.adjrow { display: flex; gap: 8px; height: 20px; }
.adjrow svg { width: 22px; height: 20px; }
.r1 { margin: 11px 0 0 60px; } .r2 { margin: 14px 0 0 45px; } .r3 { margin: 14px 0 0 60px; }
.layers { flex: 1; display: flex; flex-direction: column; }
.lrow { display: flex; align-items: center; padding-left: 5px; border-bottom: 1px solid #999; color: #777; flex: none; box-shadow: 0 1px 0 #e6e6e6; }
.lr1 { height: 35px; padding-bottom: 1px; } .lr2 { height: 35px; padding-bottom: 1px; } .lr3 { height: 37px; padding-left: 0; padding-bottom: 2px; }
.psel { height: 26px; border: 1px solid #aaa; border-radius: 3px; background: linear-gradient(#e2e2e2, #d6d6d6); display: flex; align-items: center; font-size: 14.500px; color: #777; line-height: 22px; }
.ud { margin-left: auto; margin-right: 5px; color: #777; }
.ps1 { width: 88px; } .ps2 { width: 138px; padding-left: 10px; }
.mag { margin: 0 8px 0 8px; }
.ficons { display: flex; gap: 10px; margin-left: 25px; align-items: center; }
.ficons svg { width: 20px; height: 16px; }
.ficons b { width: 20px; text-align: center; font: bold 19px/18px "Liberation Serif", serif; color: #888; }
.toggle { width: 11px; height: 22px; margin-left: 26px; border: 1px solid #999; background: linear-gradient(#ddd 45%, #888 45% 52%, #aaa 52%); }
.plb { font-size: 15px; white-space: nowrap; color: #777; line-height: 22px; flex: none; padding-bottom: 2px; }
.pl1 { width: 72px; margin-left: 10px; } .pl2 { margin-left: 8px; width: 44px; padding-bottom: 4px; } .pl3 { width: 42px; margin-left: 28px; }
.pct { display: flex; width: 70px; height: 25px; border: 1px solid #a4a4a4; border-radius: 0 3px 3px 0; background: #dcdcdc; align-items: center; }
.pct em { width: 44px; height: 23px; line-height: 23px; font-size: 14px; padding-left: 4px; background: #e9e9e9; border-right: 1px solid #a4a4a4; }
.pct svg { margin-left: 9px; }
.licons { display: flex; gap: 7.500px; }
.licons svg { width: 20px; height: 18px; }
.llist { flex: 1; display: flex; min-height: 0; background: #c6c6c6; }
.lmain { flex: 1; }
.layer { height: 49px; display: flex; align-items: center; background: #b5ccf8; border-bottom: 1px solid #aaa; }
.eye { width: 39px; height: 48px; background: #d6d6d6; border-right: 1px solid #aaa; display: flex; align-items: center; justify-content: center; }
.thumb { width: 40px; height: 40px; background: #fff; border: 1px solid #444; margin-left: 4px; }
.lname { margin-left: 14px; font-size: 14px; font-weight: 700; font-style: italic; line-height: 20px; color: #000; }
.lk { margin-left: auto; margin-right: 21px; }

.ctx { position: absolute; left: 530px; top: 454px; width: 259px; height: 528px; background: #f1f1f1; border: 1px solid #c4c4c4; padding: 1px 3px 0 38px; box-shadow: 4px 4px 3px -1px rgba(0,0,0,.5);
  font: 15px/27.500px "Noto Sans CJK SC", sans-serif; color: #111; }
.ctx div { height: 27.500px; padding-left: 4px; white-space: nowrap; }
.ctx i { font-family: "Open Sans", sans-serif; letter-spacing: .8px; }
.ctx hr { height: 1px; border: 0; background: #dadada; margin: 5px 0 3px; }
.ctx .off { color: #7c7c7c; }
.boxed { position: relative; }
.boxed::after { content: ""; position: absolute; left: -22px; top: 1px; width: 196px; height: 26px; border: 3px solid #ff3838; }

.taskbar { height: 38px; background: #212121; display: flex; overflow: hidden; }
.tb { flex: none; height: 38px; display: flex; align-items: flex-start; }
.c0 { width: 52px; padding-top: 14px; } .c1 { width: 62px; padding-top: 13px; } .c2 { width: 51px; padding-top: 11px; }
.c3 { width: 51px; padding: 10px 0 0 10px; background: linear-gradient(90deg, #3c6e37 19px, #3a3a3a 19px); }
.c4 { width: 61px; margin-left: 6px; background: #4c4c4c; padding: 10px 0 0 16px; }
.pstile { width: 28px; height: 27px; background: #100a4b; border: 2px solid #79bdf0; color: #8cc8f5; font: 600 15px/22px "Open Sans", sans-serif; text-align: center; }
.c5 { width: 83px; padding: 12px 0 0 16px; } .c6 { width: 61px; padding-top: 12px; } .c7 { padding-top: 10px; }
.tray { margin-left: auto; width: 307px; display: flex; align-items: center; height: 38px; padding-top: 11px; justify-content: space-between; flex: none; }
```
